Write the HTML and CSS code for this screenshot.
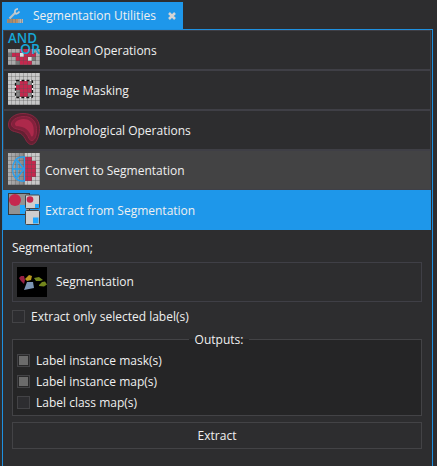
FILE: index.html
```html
<!DOCTYPE html>
<html lang="en">
<head>
<meta charset="utf-8">
<title>Segmentation Utilities</title>
<link rel="stylesheet" href="styles.css">
</head>
<body>
<svg class="defs" width="0" height="0">
  <defs>
    <pattern id="lines" width="4" height="4" patternUnits="userSpaceOnUse">
      <path d="M3.5 0V4M0 3.5H4" stroke="#555" stroke-opacity=".32" fill="none"/>
    </pattern>
    <linearGradient id="shade"><stop stop-color="#999" stop-opacity=".5"/><stop offset="1" stop-color="#777" stop-opacity=".85"/></linearGradient>
  </defs>
</svg>
<div class="tab">
  <svg class="tool" width="16" height="16" viewBox="0 0 16 16">
    <path d="M2.500 10.500 8.500 4.500" stroke="#b8c4cc" stroke-width="2.200"/>
    <path d="M11 .8C8.500 1 7.500 2.500 8 4.500S10.500 6 12.500 3.500" fill="none" stroke="#c9cdd0" stroke-width="1.800"/>
    <path d="M0 11h6v4H0z" fill="#a38a70"/><path d="M6 11h5v4H6z" fill="#b99068"/><path d="M11 11h5v4h-5z" fill="#b5b5b5"/>
    <path d="M2 11v4M5.500 10v5M8.500 11v4M12 10v5M14.500 11v4" stroke="#807d7c" stroke-width=".7"/>
  </svg>
  <span class="tab-title">Segmentation Utilities</span>
  <svg class="close" width="8" height="8" viewBox="0 0 8 8"><path d="M1 1 7 7M7 1 1 7" stroke="#d4d4d4" stroke-width="2.500"/></svg>
</div>
<main class="panel">
  <div class="row">
    <svg width="32" height="32" viewBox="0 0 32 32">
      <rect y="16" width="32" height="16" fill="#aaa"/>
      <path d="M4 20h8v-4h12v4h4v4h-4v8H12v-4H8v-4H4z" fill="#c5284e"/>
      <path d="M12 20h4v4h-4zM20 24h4v4h-4z" fill="#ddd"/>
      <path d="M0 20h4v4H0zM24 24h4v4h-4zM8 28h4v4H8z" fill="#777"/>
      <rect y="16" width="32" height="16" fill="url(#lines)"/>
      <text class="op" x="0" y="10" textLength="29" lengthAdjust="spacingAndGlyphs">AND</text>
      <text class="op" x="12" y="21" textLength="20" lengthAdjust="spacingAndGlyphs">OR</text>
    </svg>
    <span>Boolean Operations</span>
  </div>
  <div class="row">
    <svg width="32" height="32" viewBox="0 0 32 32">
      <rect width="32" height="32" fill="#c8c8c8"/>
      <rect x="8" y="8" width="16" height="16" fill="#858585"/>
      <path d="M12 8h8v4h4v8h-4v4h-8v-7H8v-5h4z" fill="#c5284e"/>
      <rect width="32" height="32" fill="url(#lines)"/>
      <rect x="7.500" y="7.500" width="17" height="17" rx="1" fill="none" stroke="#eee"/>
      <rect x="7.500" y="7.500" width="17" height="17" rx="1" fill="none" stroke="#111" stroke-width="1.300" stroke-dasharray="3 2"/>
    </svg>
    <span>Image Masking</span>
  </div>
  <div class="row">
    <svg width="32" height="32" viewBox="0 0 32 32">
      <path d="M15 .5C6 .5 0 6 .5 12S5 18 10 19.500c4 1 5 3 7 6 2 4 4 6 6.500 6 5 0 8-9 8-16C31.500 5 24 .5 15 .5Z" fill="#651f32" stroke="#872942"/>
      <path d="M15 3.500C8 4 3.500 7.500 3.500 11s3 4.500 7.500 5.500c5 1 7 3.500 9 7 1.500 3 2 4 4 4 3 0 5-6 4.500-12C28 7 22 3 15 3.500Z" fill="#83213c" stroke="#952645"/>
      <path d="M15 6C10 6.500 6.500 9 7 11.500s4 1.500 7 2.500c4 1 6 3.500 8 6.500 1 2 1 3.500 2 3 2-.5 2-5 1.500-9C25 9 20 5.500 15 6Z" fill="#ad294b"/>
    </svg>
    <span>Morphological Operations</span>
  </div>
  <div class="row hover">
    <svg width="32" height="32" viewBox="0 0 32 32">
      <rect width="32" height="32" fill="#c8c8c8"/>
      <rect width="17" height="32" fill="url(#shade)"/>
      <path d="M17 4h7v4h4v16h-4v4h-7z" fill="#c5284e"/>
      <rect width="32" height="32" fill="url(#lines)"/>
      <path d="M17 4H14C8 4 4.500 10 4.500 16S8 28 14 28H17M16.500 4V28M5 16H16M9 7l7 9M9 25l7-9M9 7v18" fill="none" stroke="#27a0ef" stroke-width="1.300"/>
    </svg>
    <span>Convert to Segmentation</span>
  </div>
  <div class="row selected">
    <svg width="32" height="32" viewBox="0 0 32 32">
      <rect x=".5" y=".5" width="21" height="21" fill="#929292" stroke="#363b40"/>
      <circle cx="7" cy="7" r="6" fill="#c5284e"/><path d="M12 12h6v9h-6z" fill="#1ea7ff"/>
      <rect x="17.500" y="2" width="14" height="13.500" rx="1" fill="#cecece" stroke="#42474b"/>
      <circle cx="22" cy="6.500" r="3.300" fill="#c5284e"/><path d="M27 11h4v4h-4z" fill="#1ea7ff"/>
      <rect x="17.500" y="17.500" width="14" height="14" rx="1" fill="#cecece" stroke="#42474b"/>
      <path d="M25 24.500h5.500v6H25z" fill="#1ea7ff"/>
    </svg>
    <span>Extract from Segmentation</span>
  </div>
  <section class="body">
    <div class="caption">Segmentation;</div>
    <div class="field">
      <svg width="30" height="30" viewBox="0 0 30 30">
        <path d="M0 0h30v30H0z" fill="#000"/>
        <path d="M2 11 4 9l3 0 1 4-1 4-3-3z" fill="#982044"/>
        <path d="m8 12 4-4 3 1-1 4-4 1z" fill="#b8961e"/>
        <path d="m10 15 6 0 1 6-10 2z" fill="#7c95b4"/>
        <path d="m17 11 5-1 4 3-3 1-4 0zM22 18l3-3 3-.5 2 3-3 2-5-.5z" fill="#73861c"/>
      </svg>
      <span>Segmentation</span>
    </div>
    <div class="option solo"><i class="box"></i><span>Extract only selected label(s)</span></div>
    <div class="group">
      <div class="legend">Outputs:</div>
      <div class="option"><i class="box on"></i><span>Label instance mask(s)</span></div>
      <div class="option"><i class="box on"></i><span>Label instance map(s)</span></div>
      <div class="option"><i class="box"></i><span>Label class map(s)</span></div>
    </div>
    <div class="button">Extract</div>
  </section>
</main>
</body>
</html>
```
FILE: styles.css
```css
* { box-sizing: border-box; }
body {
  margin: 0;
  padding: 2px 4px 0 2px;
  height: 466px;
  overflow: hidden;
  background: #2d2d2f;
  color: #f0f0f0;
  font: 12px/16px "Open Sans", "Noto Sans", sans-serif;
}
svg { display: block; flex: none; overflow: visible; }
.defs { position: absolute; }
.tab {
  display: flex;
  align-items: center;
  width: 181px;
  height: 27px;
  padding-left: 5px;
  background: #1e97ea;
}
.tab-title { margin-left: 10px; width: 123px; white-space: nowrap; }
.close { margin-left: 12px; }
.panel {
  width: 431px;
  height: 437px;
  border: 1px solid #1e90df;
  border-bottom: 0;
}
.row {
  display: flex;
  align-items: center;
  gap: 5px;
  width: 428px;
  height: 40px;
  padding: 0 0 2px 4px;
  border: 1px solid #3f3f46;
}
.row span { padding-top: 4px; }
.row.hover { background: #434344; }
.row.selected { background: #1e97ea; border-color: #1e97ea; }
.op { font: 600 14px "Open Sans", sans-serif; fill: #17a6d6; }
.body { width: 419px; padding: 10px 0 0 9px; }
.caption { height: 22px; }
.field {
  display: flex;
  align-items: center;
  gap: 9px;
  height: 40px;
  padding-left: 4px;
  border: 1px solid #3f3f46;
}
.option { display: flex; align-items: center; gap: 6px; height: 21px; }
.option.solo { margin-top: 4px; }
.box { width: 13px; height: 13px; border: 1px solid #434346; background: #2d2d30; }
.box.on { background: #6b6b6b; box-shadow: inset 0 0 0 1px #29292a; }
.group {
  height: 77px;
  margin-top: 12px;
  padding-left: 4px;
  border: 1px solid #434346;
  background: #252526;
}
.legend {
  width: 60px;
  height: 18px;
  margin: -9px auto 1px 172px;
  padding-top: 1px;
  text-align: center;
  background: linear-gradient(#2d2d2f 8px, #252526 8px);
}
.button {
  height: 27px;
  margin-top: 6px;
  border: 1px solid #434346;
  line-height: 26px;
  text-align: center;
}
```
